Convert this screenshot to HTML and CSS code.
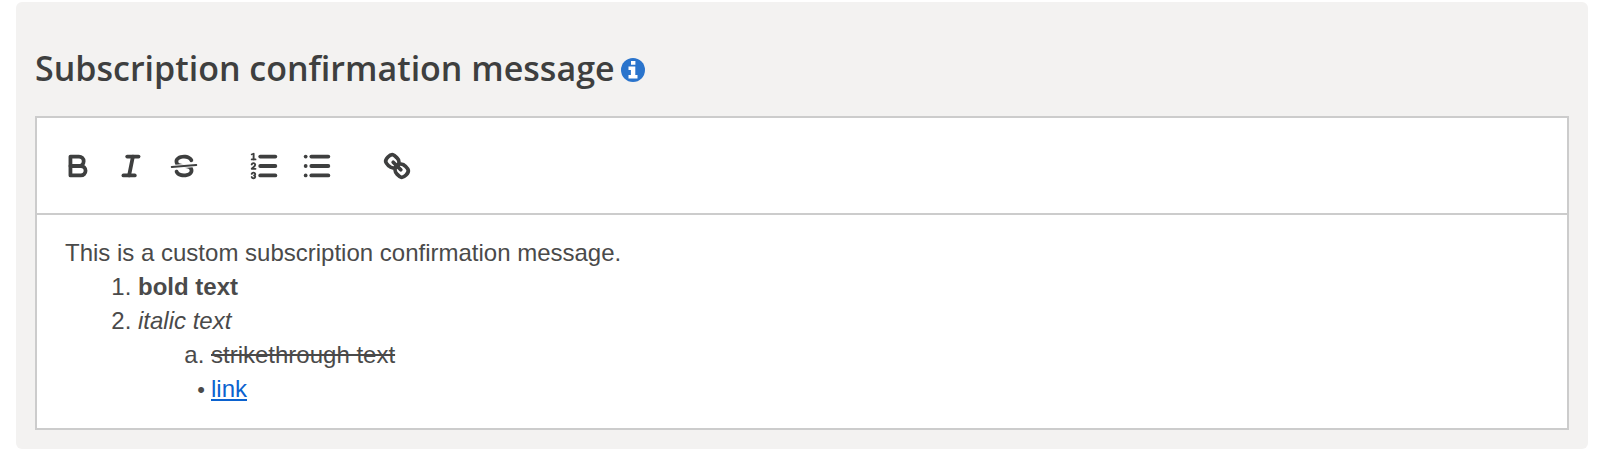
FILE: index.html
```html
<!DOCTYPE html>
<html lang="en">
<head>
    <meta charset="UTF-8">
    <meta name="viewport" content="width=device-width, initial-scale=1.0">
    <title>Subscription confirmation message</title>
    <link rel="stylesheet" href="styles.css">
</head>
<body>
    <section class="panel">
        <div class="panel-header">
            <h2 id="message-title">Subscription confirmation message</h2>
            <button type="button" class="info-btn" aria-label="More information">
                <svg viewBox="0 0 24 24">
                    <circle cx="12" cy="12" r="12" fill="#2a74cc"/>
                    <path fill="#fff" d="M10 3h4.4v3.8H10zM7.5 8.5h6.8V17h2.2v3.4h-9V17h2.4v-5.100H7.500z"/>
                </svg>
            </button>
        </div>

        <div class="editor">
            <!-- Toolbar -->
            <div class="toolbar" role="toolbar" aria-label="Formatting">
                <div class="formats">
                    <button type="button" aria-label="Bold">
                        <svg viewBox="0 0 18 18">
                            <path class="stroke" d="M5,4H9.5A2.5,2.5,0,0,1,12,6.5v0A2.5,2.5,0,0,1,9.5,9H5A0,0,0,0,1,5,9V4A0,0,0,0,1,5,4Z"/>
                            <path class="stroke" d="M5,9h5.5A2.5,2.5,0,0,1,13,11.5v0A2.5,2.5,0,0,1,10.5,14H5a0,0,0,0,1,0,0V9A0,0,0,0,1,5,9Z"/>
                        </svg>
                    </button>
                    <button type="button" aria-label="Italic">
                        <svg viewBox="0 0 18 18">
                            <line class="stroke" x1="7" x2="13" y1="4" y2="4"/>
                            <line class="stroke" x1="5" x2="11" y1="14" y2="14"/>
                            <line class="stroke" x1="8" x2="10" y1="14" y2="4"/>
                        </svg>
                    </button>
                    <button type="button" aria-label="Strikethrough">
                        <svg viewBox="0 0 18 18">
                            <line class="stroke thin" x1="15.5" x2="2.5" y1="8.5" y2="9.5"/>
                            <path class="fill" d="M9.007,8C6.542,7.791,6,7.519,6,6.5,6,5.792,7.283,5,9,5c1.571,0,2.765.679,2.969,1.309a1,1,0,0,0,1.9-.617C13.356,4.106,11.354,3,9,3,6.2,3,4,4.538,4,6.5a3.2,3.2,0,0,0,.5,1.843Z"/>
                            <path class="fill" d="M8.984,10C11.457,10.208,12,10.479,12,11.5c0,.708-1.283,1.5-3,1.5-1.571,0-2.765-.679-2.969-1.309a1,1,0,1,0-1.9.617C4.644,13.894,6.646,15,9,15c2.8,0,5-1.538,5-3.5a3.2,3.2,0,0,0-.5-1.843Z"/>
                        </svg>
                    </button>
                </div>
                <div class="formats">
                    <button type="button" aria-label="Numbered list">
                        <svg viewBox="0 0 18 18">
                            <line class="stroke" x1="7" x2="15" y1="4" y2="4"/>
                            <line class="stroke" x1="7" x2="15" y1="9" y2="9"/>
                            <line class="stroke" x1="7" x2="15" y1="14" y2="14"/>
                            <line class="stroke thin" x1="2.5" x2="4.5" y1="5.5" y2="5.5"/>
                            <path class="fill" d="M3.5,6A0.5,0.5,0,0,1,3,5.5V3.085l-0.276.138A0.5,0.5,0,0,1,2.053,3c-0.124-.247-0.023-0.324.224-0.447l1-.5A0.5,0.5,0,0,1,4,2.5v3A0.5,0.5,0,0,1,3.5,6Z"/>
                            <path class="stroke thin" d="M4.5,10.5h-2c0-.234,1.85-1.076,1.85-2.234A0.959,0.959,0,0,0,2.5,8.156"/>
                            <path class="stroke thin" d="M2.5,14.846a0.959,0.959,0,0,0,1.85-.109A0.7,0.7,0,0,0,3.75,14a0.688,0.688,0,0,0,.6-0.736,0.959,0.959,0,0,0-1.85-.109"/>
                        </svg>
                    </button>
                    <button type="button" aria-label="Bulleted list">
                        <svg viewBox="0 0 18 18">
                            <line class="stroke" x1="6" x2="15" y1="4" y2="4"/>
                            <line class="stroke" x1="6" x2="15" y1="9" y2="9"/>
                            <line class="stroke" x1="6" x2="15" y1="14" y2="14"/>
                            <line class="stroke" x1="3" x2="3" y1="4" y2="4"/>
                            <line class="stroke" x1="3" x2="3" y1="9" y2="9"/>
                            <line class="stroke" x1="3" x2="3" y1="14" y2="14"/>
                        </svg>
                    </button>
                </div>
                <div class="formats">
                    <button type="button" aria-label="Link">
                        <svg viewBox="0 0 18 18">
                            <line class="stroke" x1="7" x2="11" y1="7" y2="11"/>
                            <path class="stroke" d="M8.9,4.577a3.476,3.476,0,0,1,.36,4.679A3.476,3.476,0,0,1,4.577,8.9C3.185,7.5,2.035,6.4,4.217,4.217S7.5,3.185,8.9,4.577Z"/>
                            <path class="stroke" d="M13.423,9.1a3.476,3.476,0,0,0-4.679-.36,3.476,3.476,0,0,0,.36,4.679c1.392,1.392,2.5,2.542,4.679.36S14.815,10.5,13.423,9.1Z"/>
                        </svg>
                    </button>
                </div>
            </div>

            <!-- Message text -->
            <div class="editor-content" contenteditable="true" spellcheck="false" role="textbox" aria-multiline="true" aria-labelledby="message-title">
                <p>This is a custom subscription confirmation message.</p>
                <ol>
                    <li><strong>bold text</strong></li>
                    <li><em>italic text</em>
                        <ol class="alpha">
                            <li><s>strikethrough text</s></li>
                        </ol>
                        <ul>
                            <li><a href="#">link</a></li>
                        </ul>
                    </li>
                </ol>
            </div>
        </div>
    </section>
</body>
</html>
```

FILE: styles.css
```css
* {
    box-sizing: border-box;
}

body {
    margin: 0;
    padding: 2px 12px 0 16px;
    background: #fff;
    font-family: "Liberation Sans", Arial, sans-serif;
}

.panel {
    padding: 42px 19px 19px;
    background: #f3f2f1;
    border-radius: 6px;
}

.panel-header {
    display: flex;
    align-items: center;
    gap: 6px;
    margin-bottom: 24px;
}

h2 {
    margin: 0;
    color: #3e3f3f;
    font-family: "Open Sans", sans-serif;
    font-size: 34px;
    font-weight: 600;
    line-height: 48px;
}

.info-btn {
    padding: 3px 0 0;
    border: none;
    background: none;
    cursor: pointer;
}

.info-btn svg {
    display: block;
    width: 24px;
    height: 24px;
}

.editor {
    border: 2px solid #ccc;
    background: #fff;
}

.toolbar {
    display: flex;
    gap: 46px;
    padding: 31px 24px 30px;
    border-bottom: 2px solid #ccc;
}

.formats {
    display: flex;
    gap: 19px;
}

.formats button {
    padding: 0;
    border: none;
    background: none;
    cursor: pointer;
}

.formats svg {
    display: block;
    width: 34px;
    height: 34px;
}

.stroke {
    fill: none;
    stroke: #3e3f3f;
    stroke-width: 2;
    stroke-linecap: round;
    stroke-linejoin: round;
}

.thin {
    stroke-width: 1;
}

.fill {
    fill: #3e3f3f;
}

.editor-content {
    padding: 21px 28px 22px;
    color: #4a4a4a;
    font-size: 24px;
    line-height: 34px;
    outline: none;
}

.editor-content p {
    margin: 0;
}

.editor-content ol,
.editor-content ul {
    margin: 0;
    padding-left: 73px;
}

.editor-content .alpha {
    list-style-type: lower-alpha;
}

.editor-content ul {
    list-style-type: "•\00a0";
}

.editor-content ul li::marker {
    font-size: 22px;
}

.editor-content a {
    color: #0b62cf;
}
```
